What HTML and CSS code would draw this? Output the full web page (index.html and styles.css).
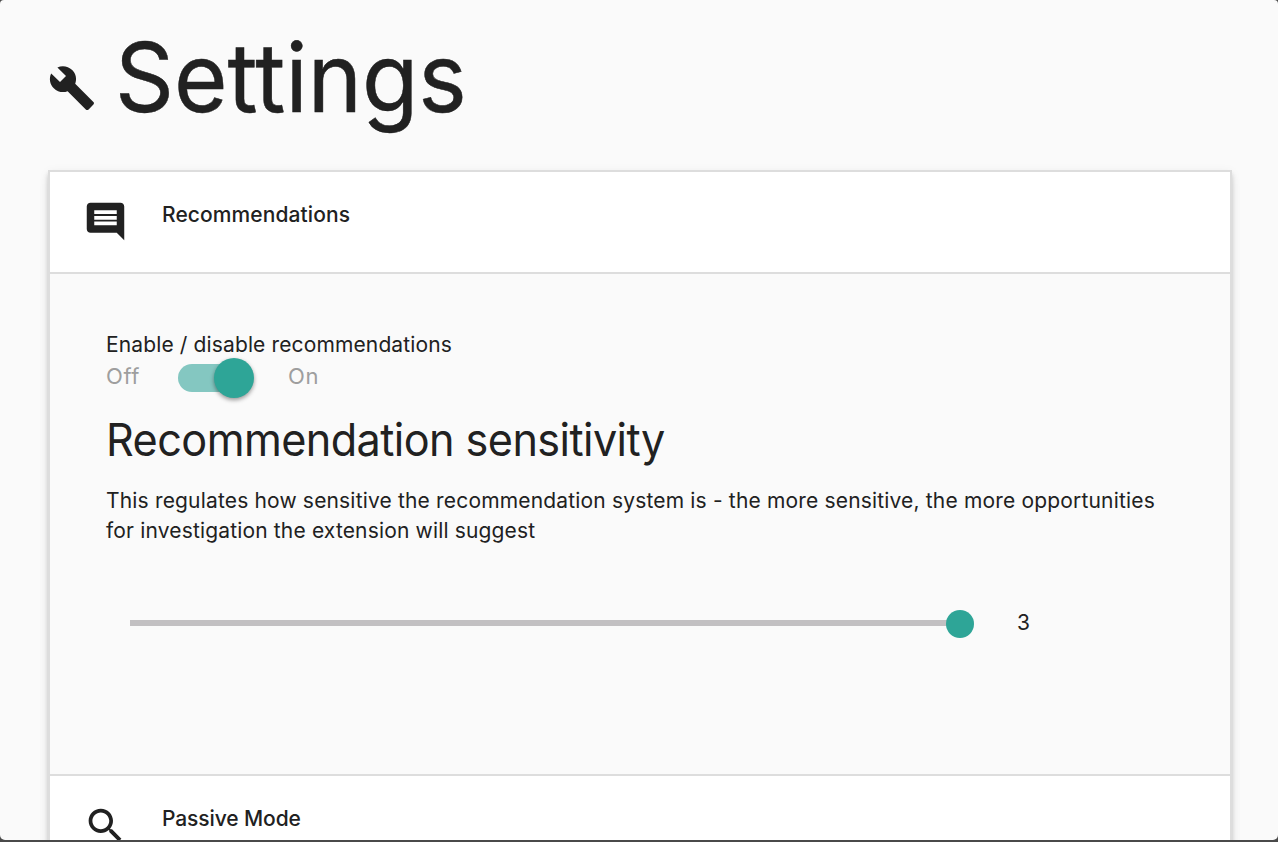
FILE: index.html
```html
<!DOCTYPE html>
<html lang="en">
<head>
<meta charset="utf-8">
<title>Settings</title>
<link rel="stylesheet" href="styles.css">
</head>
<body>
<main class="window">
  <h1 class="title">
    <svg class="title-icon" viewBox="0 0 24 24"><path d="M22.7 19l-9.1-9.1c.9-2.3.4-5-1.5-6.9-2-2-5-2.4-7.4-1.3L9 6 6 9 1.6 4.7C.4 7.1.9 10.1 2.9 12.1c1.9 1.9 4.6 2.4 6.9 1.5l9.1 9.1c.4.4 1 .4 1.4 0l2.3-2.3c.5-.4.5-1.1.1-1.4z"/></svg>
    <span class="title-text">Settings</span>
  </h1>
  <ul class="collapsible">
    <li>
      <div class="header">
        <svg class="header-icon" viewBox="0 0 24 24"><path d="M21.99 4c0-1.1-.89-2-1.99-2H4c-1.1 0-2 .9-2 2v12c0 1.1.9 2 2 2h14l4 4-.01-18zM18 14H6v-2h12v2zm0-3H6V9h12v2zm0-3H6V6h12v2z"/></svg>
        <span class="header-text recs">Recommendations</span>
      </div>
      <div class="body">
        <p class="line"><span class="enable">Enable / disable recommendations</span></p>
        <div class="switch">
          <span class="off">Off</span>
          <span class="lever"><span class="knob"></span></span>
          <span class="on">On</span>
        </div>
        <h2 class="subtitle"><span class="subtitle-text">Recommendation sensitivity</span></h2>
        <p class="line"><span class="desc">This regulates how sensitive the recommendation system is - the more sensitive, the more opportunities</span><br><span class="desc-end">for investigation the extension will suggest</span></p>
        <div class="range">
          <div class="track"><span class="thumb"></span></div>
          <span class="value">3</span>
        </div>
      </div>
    </li>
    <li>
      <div class="header">
        <svg class="header-icon" viewBox="0 0 24 24"><path d="M15.5 14h-.79l-.28-.27C15.41 12.59 16 11.11 16 9.5 16 5.91 13.09 3 9.5 3S3 5.91 3 9.5 5.91 16 9.5 16c1.61 0 3.09-.59 4.23-1.57l.27.28v.79l5 4.99L20.49 19l-4.99-5zm-6 0C7.01 14 5 11.99 5 9.5S7.01 5 9.5 5 14 7.01 14 9.5 11.99 14 9.5 14z"/></svg>
        <span class="header-text passive">Passive Mode</span>
      </div>
    </li>
  </ul>
</main>
</body>
</html>
```
FILE: styles.css
```css
* { box-sizing: border-box; }
body {
  margin: 0;
  height: 842px;
  overflow: hidden;
  background: #4a4a4a;
  color: #212121;
  font-family: Inter, "Liberation Sans", sans-serif;
  font-size: 21px;
}
h1, h2, p, ul { margin: 0; padding: 0; font-weight: 400; list-style: none; }
svg { fill: #212121; flex: none; display: block; }
.window {
  height: 840px;
  overflow: hidden;
  background: #fafafa;
  border-radius: 4px 4px 5px 5px;
  padding: 0 46px 0 48px;
}
.title { display: flex; height: 170px; font-size: 96px; line-height: 155px; }
.title-icon { width: 48px; height: 48px; margin-top: 64px; }
.title-text { margin-left: 19px; white-space: nowrap; transform: scaleX(.957); transform-origin: 0 0; -webkit-text-stroke: .5px #212121; }
.collapsible {
  border: 2px solid #ddd;
  border-bottom: 0;
  height: 800px;
  box-shadow: 0 4px 4px 0 rgba(0,0,0,.14), 0 6px 10px -2px rgba(0,0,0,.12), 0 2px 10px 0 rgba(0,0,0,.06);
}
.header {
  display: flex;
  height: 102px;
  padding: 27px 0 0 33.4px;
  background: #fff;
  border-bottom: 2px solid #ddd;
}
.header-icon { width: 45px; height: 45px; }
.header-text { margin-left: 33.6px; height: 30px; line-height: 32px; font-weight: 500; }
.recs { letter-spacing: .09px; }
.passive { letter-spacing: -.1px; }
.body {
  height: 502px;
  padding: 56px 40px 0 56px;
  background: #fafafa;
  border-bottom: 2px solid #ddd;
}
.line { line-height: 30px; white-space: nowrap; }
.enable { letter-spacing: .13px; }
.desc { letter-spacing: .17px; }
.desc-end { letter-spacing: .16px; }
.switch { display: flex; height: 32px; line-height: 33px; color: #9e9e9e; font-size: 22px; letter-spacing: .6px; }
.off { width: 72px; }
.lever {
  width: 72px;
  height: 28px;
  margin-top: 4px;
  border-radius: 14px;
  background: #84c7c1;
  display: flex;
  align-items: center;
  padding-left: 36px;
}
.knob { width: 40px; height: 40px; flex: none; border-radius: 50%; background: #2ea597; box-shadow: 0 2px 4px rgba(0,0,0,.4); }
.on { margin-left: 38px; }
.subtitle { height: 94px; padding-top: 18px; font-size: 45px; line-height: 60px; letter-spacing: -.6px; white-space: nowrap; }
.subtitle-text { display: inline-block; transform: scaleX(.96); transform-origin: 0 0; }
.range { display: flex; padding: 60px 0 0 24px; height: 100px; }
.track { width: 844px; height: 6px; margin-top: 14px; background: #c2c0c2; display: flex; justify-content: flex-end; align-items: center; border-radius: 0 3px 3px 0; }
.thumb { width: 28px; height: 28px; border-radius: 50%; background: #2ea597; flex: none; margin-top: 2px; }
.value { margin-left: 43px; line-height: 34px; }
```
